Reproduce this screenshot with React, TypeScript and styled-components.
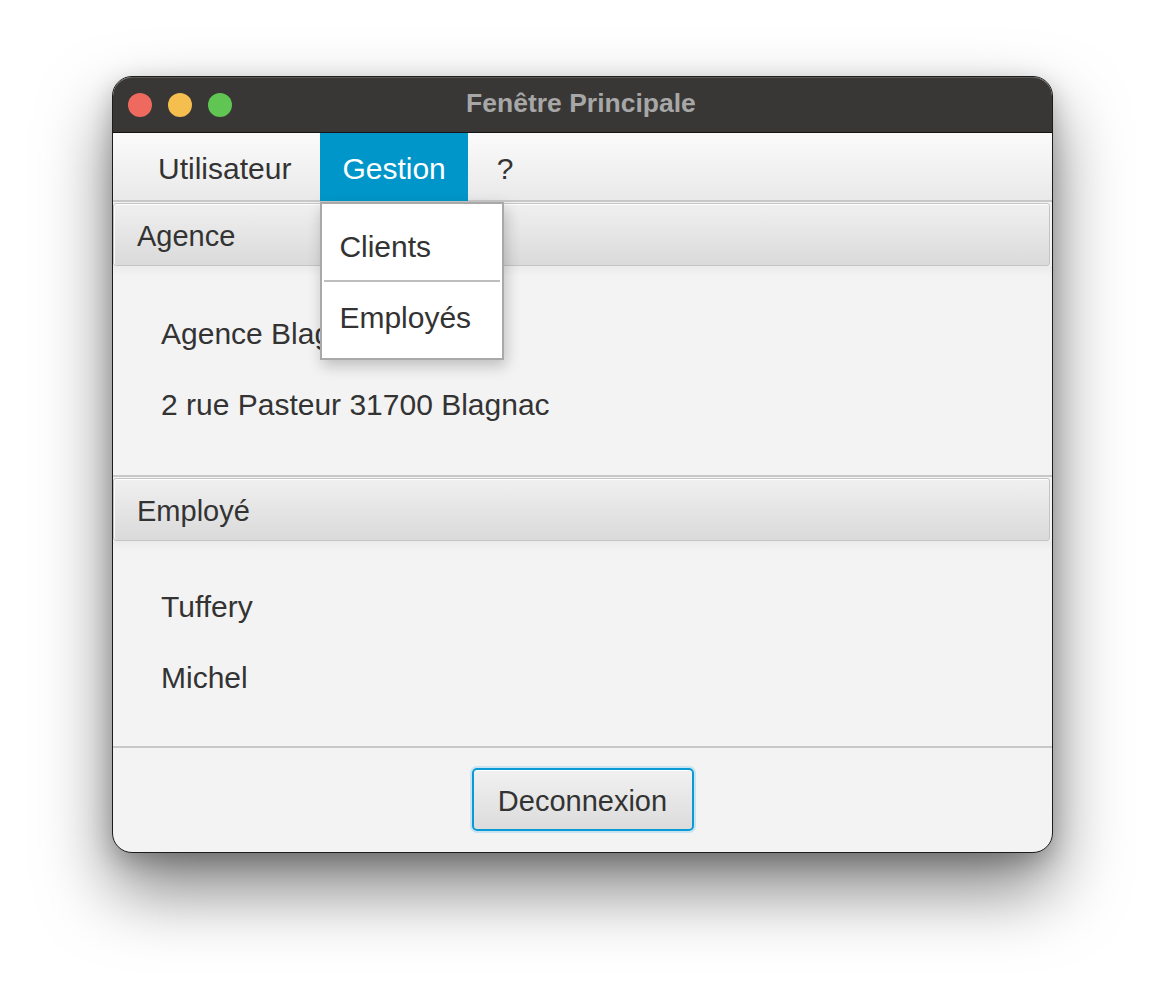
import React from "react";
import styled, { createGlobalStyle } from "styled-components";

const GlobalStyle = createGlobalStyle`
  html, body {
    margin: 0;
    padding: 0;
    background: #ffffff;
  }
  body {
    font-family: "Liberation Sans", Arial, sans-serif;
  }
`;

const Page = styled.div`
  width: 1164px;
  height: 1000px;
  padding: 76px 0 0 112px;
  box-sizing: border-box;
  display: flex;
  align-items: flex-start;
`;

const Window = styled.div`
  width: 941px;
  height: 777px;
  box-sizing: border-box;
  border: 1px solid #1c1c1c;
  border-radius: 20px;
  background: #f3f3f3;
  display: flex;
  flex-direction: column;
  box-shadow: 0 36px 70px rgba(0, 0, 0, 0.5), 0 8px 24px rgba(0, 0, 0, 0.22);
  color: #333333;
  font-size: 30px;
`;

const TitleBar = styled.div`
  height: 56px;
  flex-shrink: 0;
  background: #383736;
  border-radius: 19px 19px 0 0;
  border-top: 1px solid #5a5958;
  border-bottom: 1px solid #141414;
  box-sizing: border-box;
  display: flex;
  align-items: center;
  padding-left: 15px;
`;

const Lights = styled.div`
  display: flex;
  gap: 16px;
`;

const Light = styled.span<{ $color: string }>`
  width: 24px;
  height: 24px;
  border-radius: 50%;
  background: ${(p) => p.$color};
`;

const Title = styled.div`
  flex: 1;
  text-align: center;
  font-weight: bold;
  font-size: 26.5px;
  color: #a7a7a7;
  margin-right: 122px;
  padding-bottom: 3px;
`;

const MenuBar = styled.div`
  height: 69px;
  flex-shrink: 0;
  box-sizing: border-box;
  background: linear-gradient(#fbfbfb, #e9e9e9);
  border-bottom: 2px solid #c8c8c8;
  display: flex;
  align-items: stretch;
  gap: 7px;
  padding-left: 23px;
`;

const MenuItem = styled.div<{ $active?: boolean }>`
  position: relative;
  display: flex;
  align-items: center;
  padding: 3px 22px 0;
  margin-bottom: -1px;
  background: ${(p) => (p.$active ? "#0096c9" : "transparent")};
  color: ${(p) => (p.$active ? "#ffffff" : "#333333")};
`;

const Dropdown = styled.div`
  position: absolute;
  top: 100%;
  left: 0;
  margin-top: 1px;
  width: 184px;
  box-sizing: border-box;
  background: #ffffff;
  border: 2px solid #a9a9a9;
  box-shadow: 2px 6px 14px rgba(0, 0, 0, 0.22);
  display: flex;
  flex-direction: column;
  z-index: 10;
`;

const DropItem = styled.div<{ $shift: number }>`
  height: 76px;
  box-sizing: border-box;
  display: flex;
  align-items: center;
  padding-left: 17px;
  padding-top: ${(p) => Math.max(p.$shift, 0)}px;
  padding-bottom: ${(p) => Math.max(-p.$shift, 0)}px;
  color: #333333;
`;

const DropSeparator = styled.div`
  height: 2px;
  margin: 0 2px;
  background: #bdbdbd;
`;

const Body = styled.div`
  flex: 1;
  display: flex;
  flex-direction: column;
`;

const Pane = styled.div`
  display: flex;
  flex-direction: column;
  margin-top: 1px;
`;

const PaneHeader = styled.div`
  height: 63px;
  box-sizing: border-box;
  margin-right: 2px;
  border: 1px solid #c4c4c4;
  border-radius: 3px;
  box-shadow: inset 0 1px 0 #ffffff, inset 1px 0 0 #fafafa;
  background: linear-gradient(#f0f0f0, #dadada);
  display: flex;
  align-items: center;
  padding: 3px 0 0 23px;
  font-size: 29px;
`;

const PaneContent = styled.div<{ $height: number }>`
  height: ${(p) => p.$height}px;
  box-sizing: border-box;
  border-bottom: 2px solid #c8c8c8;
  background: linear-gradient(#ebebeb, #f3f3f3 10px);
  display: flex;
  flex-direction: column;
  justify-content: center;
  gap: 35px;
  padding-left: 48px;
  padding-bottom: 2px;
`;

const Line = styled.div`
  line-height: 36px;
  height: 36px;
`;

const Footer = styled.div`
  flex: 1;
  display: flex;
  justify-content: center;
  align-items: flex-start;
  padding-top: 20px;
`;

const Button = styled.button`
  width: 222px;
  height: 63px;
  box-sizing: border-box;
  font-family: inherit;
  font-size: 29px;
  color: #333333;
  border: 2px solid #0a9bd6;
  border-radius: 5px;
  background: linear-gradient(#f1f1f1, #dcdcdc);
  box-shadow: 0 0 0 2px rgba(120, 200, 235, 0.35), inset 0 1px 0 #ffffff;
  padding: 4px 0 0;
`;

export default function App() {
  return (
    <Page>
      <GlobalStyle />
      <Window>
        <TitleBar>
          <Lights>
            <Light $color="#ee6a5f" />
            <Light $color="#f5bf4f" />
            <Light $color="#61c554" />
          </Lights>
          <Title>Fenêtre Principale</Title>
        </TitleBar>
        <MenuBar>
          <MenuItem>Utilisateur</MenuItem>
          <MenuItem $active>
            Gestion
            <Dropdown>
              <DropItem $shift={10}>Clients</DropItem>
              <DropSeparator />
              <DropItem $shift={-5}>Employés</DropItem>
            </Dropdown>
          </MenuItem>
          <MenuItem>?</MenuItem>
        </MenuBar>
        <Body>
          <Pane>
            <PaneHeader>Agence</PaneHeader>
            <PaneContent $height={211}>
              <Line>Agence Blagnac</Line>
              <Line>2 rue Pasteur 31700 Blagnac</Line>
            </PaneContent>
          </Pane>
          <Pane>
            <PaneHeader>Employé</PaneHeader>
            <PaneContent $height={207}>
              <Line>Tuffery</Line>
              <Line>Michel</Line>
            </PaneContent>
          </Pane>
          <Footer>
            <Button>Deconnexion</Button>
          </Footer>
        </Body>
      </Window>
    </Page>
  );
}
